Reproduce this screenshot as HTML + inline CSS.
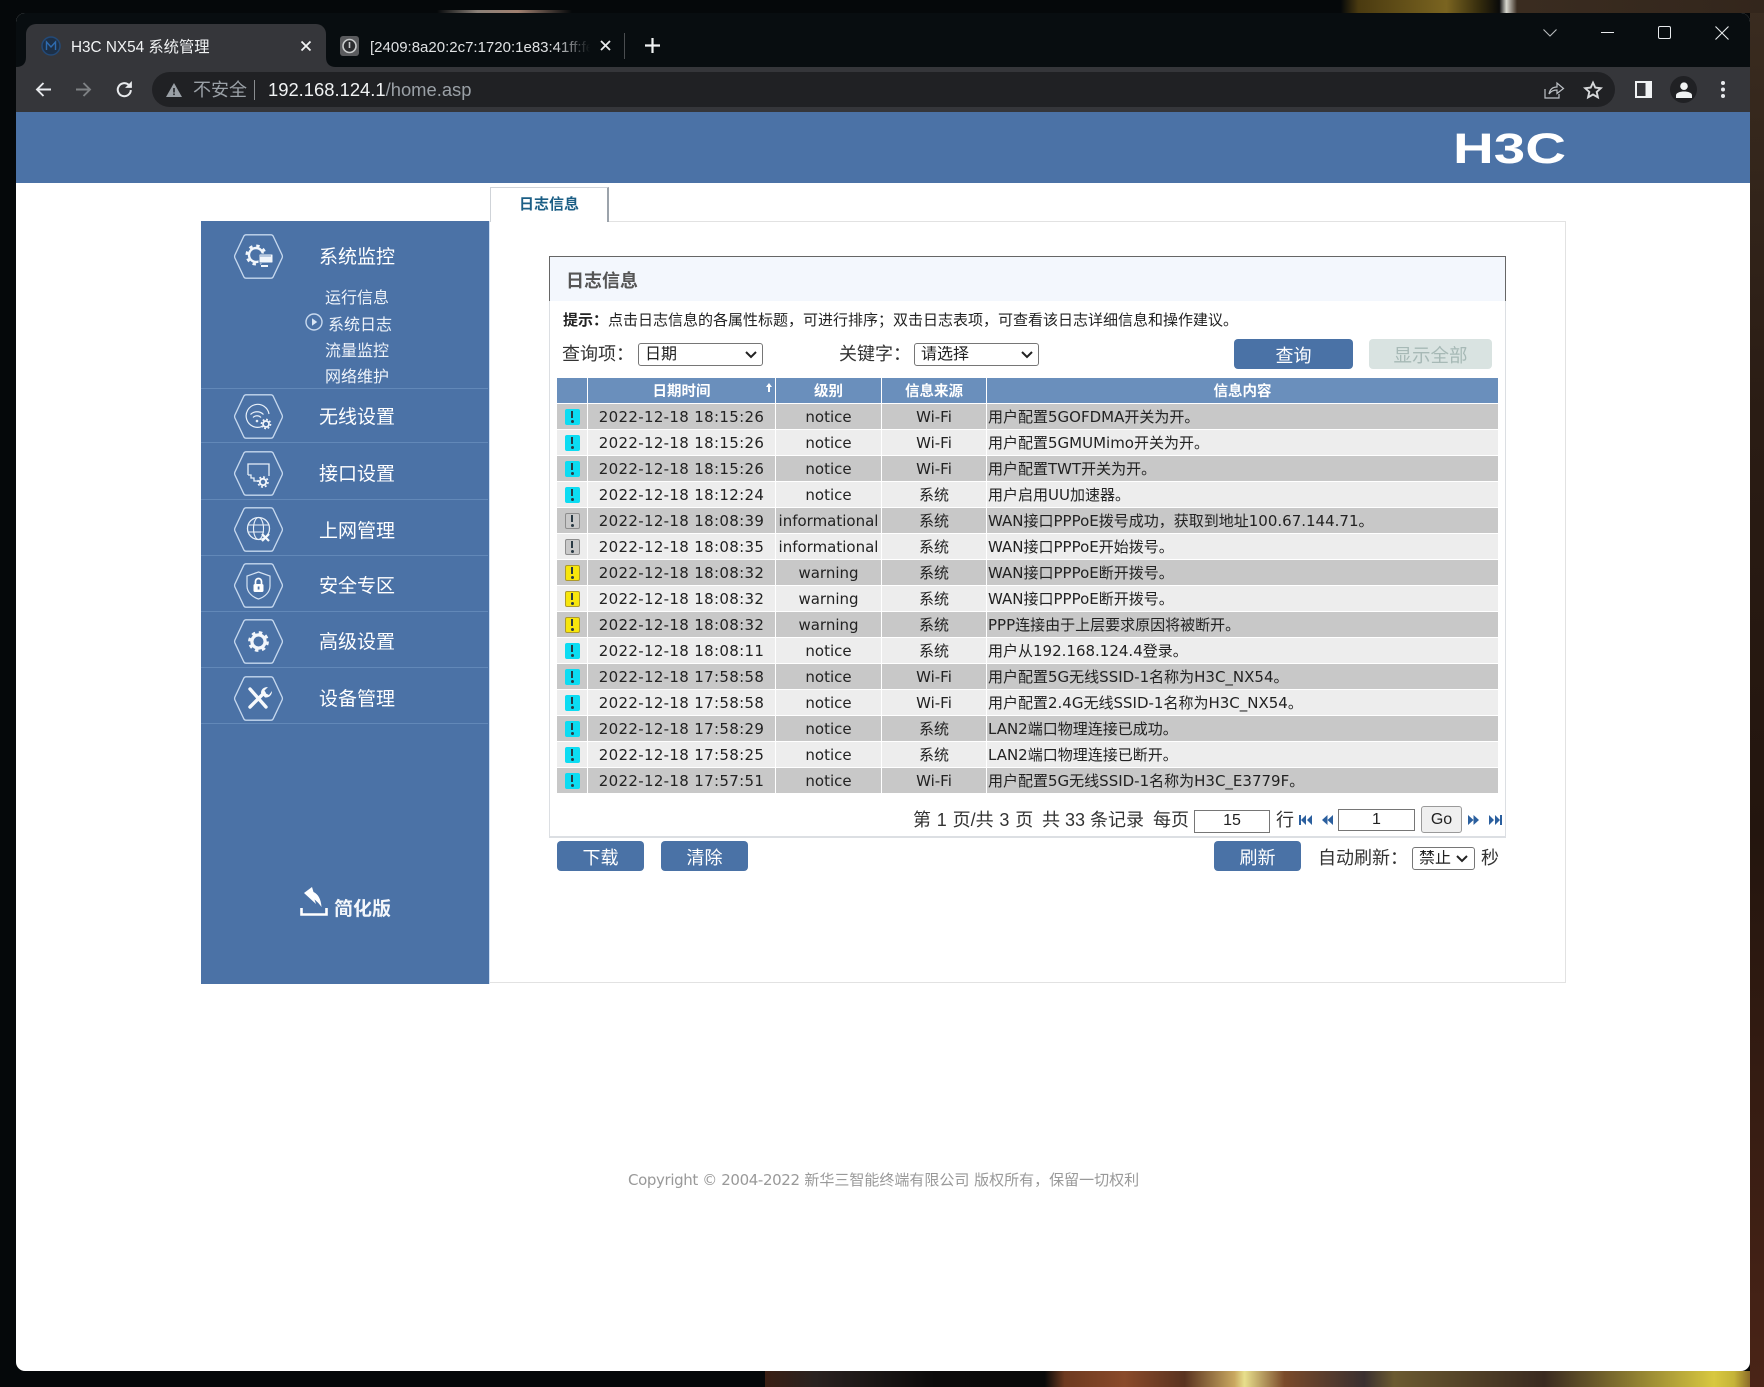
<!DOCTYPE html>
<html lang="zh-CN">
<head>
<meta charset="utf-8">
<title>H3C NX54 系统管理</title>
<style>
html,body{margin:0;padding:0;width:1764px;height:1387px;overflow:hidden;background:#05080a;}
*{box-sizing:border-box;}
body{position:relative;font-family:"Liberation Sans","Noto Sans CJK SC",sans-serif;}
.a{position:absolute;}
.t{position:absolute;white-space:nowrap;line-height:1;}
#win{position:absolute;left:16px;top:13px;width:1734px;height:1358px;border-radius:9px;background:#fff;overflow:hidden;}
.s{color:#fff;font-size:19px;left:319px;}
.sub{color:#eef3fa;font-size:16px;}
.dv{position:absolute;left:201px;width:287px;height:1px;background:#6288b8;}
.hex{position:absolute;left:234px;width:49px;height:45px;overflow:visible;}
.btn{position:absolute;background:#4a72a6;border-radius:4px;color:#fff;font-size:18px;line-height:34px;text-align:center;height:30px;}
table{position:absolute;left:557px;top:378px;width:941px;border-collapse:separate;border-spacing:0;table-layout:fixed;font-family:"DejaVu Sans","Noto Sans CJK SC",sans-serif;font-size:15px;color:#222;}
td,th{padding:0;height:26px;border-right:1px solid #fff;border-bottom:1px solid #fff;text-align:center;white-space:nowrap;overflow:hidden;line-height:24px;}
td:last-child,th:last-child{border-right:0;text-align:left;padding-left:1px;}
th{background:#6a8fbc;color:#fff;font-weight:bold;font-family:"Noto Sans CJK SC",sans-serif;font-size:14.5px;position:relative;}
th:last-child{text-align:center;padding-left:0;}
tr.o td{background:#c8c8c8;}
tr.e td{background:#ededed;}
td.d{letter-spacing:.33px;}
td b{display:block;width:15px;height:16px;margin:1px auto 0;border-radius:2px;position:relative;}
td b:before{content:"";position:absolute;left:6.5px;top:2px;width:2px;height:7px;background:#2a3a44;}
td b:after{content:"";position:absolute;left:6px;top:11px;width:3px;height:3px;border-radius:2px;background:#2a3a44;}
b.n{background:#0cdcf2;}
b.g{background:#c9c9c9;border:1px solid #8d8d8d;}
b.g:before{left:5.5px;top:1px;}
b.g:after{left:5px;top:10px;}
b.w{background:#f7e60c;border:1px solid #ad9a2c;}
b.w:before{left:5.5px;top:1px;}
b.w:after{left:5px;top:10px;}
select{position:absolute;-webkit-appearance:none;appearance:none;font-family:"Liberation Sans","Noto Sans CJK SC",sans-serif;font-size:16px;background:#fff;border:1px solid #767676;border-radius:3px;color:#222;padding:0 0 0 6px;margin:0;}
input{position:absolute;font-family:"Liberation Sans",sans-serif;font-size:16px;text-align:center;border:1px solid #767676;border-radius:0;padding:0;margin:0;color:#222;background:#fff;}
.l{font-size:18px;color:#333;}
.p{position:absolute;overflow:visible;}
</style>
</head>
<body>
<!-- wallpaper -->
<div class="a" style="left:765px;top:1371px;width:999px;height:16px;background:linear-gradient(90deg,#3a1f14 0,#2a2220 5%,#0c0b0b 17%,#0a0a0a 28%,#6e3a20 30%,#8a4a2a 36%,#5a3320 42%,#c9a860 47%,#e8df8c 48%,#7a4a2a 52%,#3a3030 60%,#6b5a30 63%,#3a2a20 78%,#d8c840 95%,#c5b438 97%,#5a2c1a 100%);"></div>
<div class="a" style="left:1750px;top:0;width:14px;height:1387px;background:linear-gradient(180deg,#3a2c20,#2a1c14 30%,#23150e 60%,#4a2417);"></div>
<div class="a" style="left:0;top:0;width:1764px;height:13px;background:linear-gradient(90deg,#05080a 0,#05080a 76%,#4a3a10 77%,#7a6420 82%,#30280c 84%,#0a0a0a 85%,#d8d8d0 85.4%,#3a2c20 86%,#33261c 100%);"></div>
<div class="a" style="left:437px;top:10px;width:135px;height:3px;background:linear-gradient(90deg,#05080a,#8a8078 30%,#a08070 60%,#05080a);"></div>

<div id="win"></div>
<!-- tab strip -->
<div class="a" style="left:16px;top:13px;width:1734px;height:54px;background:#080d10;border-radius:9px 9px 0 0;"></div>
<div class="a" style="left:26px;top:24px;width:300px;height:44px;background:#35363a;border-radius:10px 10px 0 0;"></div>
<svg class="p" style="left:16px;top:57px" width="10" height="10"><path d="M0 10H10V0Q10 10 0 10Z" fill="#35363a"/></svg>
<svg class="p" style="left:326px;top:57px" width="10" height="10"><path d="M10 10H0V0Q0 10 10 10Z" fill="#35363a"/></svg>
<svg class="p" style="left:41px;top:36px" width="20" height="20" viewBox="0 0 20 20"><circle cx="10" cy="10" r="9" fill="#1d3047" stroke="#234a78" stroke-width="1.5"/><path d="M5.5 14V6L10 11L14.5 6V14" fill="none" stroke="#2e6bb0" stroke-width="1.4"/></svg>
<div class="t" style="left:71px;top:39px;font-size:15.3px;line-height:18px;color:#f1f3f4;">H3C NX54 系统管理</div>
<svg class="p" style="left:300px;top:40px" width="12" height="12"><path d="M1.5 1.5L10.5 10.5M10.5 1.5L1.5 10.5" stroke="#f1f3f4" stroke-width="1.8"/></svg>
<svg class="p" style="left:340px;top:36px" width="20" height="20" viewBox="0 0 20 20"><rect width="19" height="20" rx="3" fill="#5a5b5e"/><circle cx="9.5" cy="10" r="6.5" fill="#2c2d30" stroke="#c9cbcc" stroke-width="1.6"/><rect x="8.7" y="6" width="1.6" height="6" fill="#c9cbcc"/></svg>
<div class="t" style="left:370px;top:39px;width:220px;overflow:hidden;font-size:15px;line-height:18px;color:#dfe1e3;">[2409:8a20:2c7:1720:1e83:41ff:fe</div>
<div class="a" style="left:555px;top:36px;width:35px;height:20px;background:linear-gradient(90deg,rgba(8,13,16,0),#080d10);"></div>
<svg class="p" style="left:600px;top:40px" width="11" height="11"><path d="M1 1L10 10M10 1L1 10" stroke="#e8eaed" stroke-width="1.8"/></svg>
<div class="a" style="left:624px;top:33px;width:1px;height:26px;background:#4a4d50;"></div>
<svg class="p" style="left:645px;top:38px" width="15" height="15"><path d="M7.500 0V15M0 7.500H15" stroke="#f1f3f4" stroke-width="2.2"/></svg>
<!-- window controls -->
<svg class="p" style="left:1543px;top:28px" width="14" height="10"><path d="M.5 1.5L7 8L13.5 1.5" fill="none" stroke="#b9bcbe" stroke-width="1.1"/></svg>
<div class="a" style="left:1601px;top:32px;width:13px;height:1px;background:#e8eaed;"></div>
<div class="a" style="left:1658px;top:26px;width:13px;height:13px;border:1px solid #e8eaed;border-radius:2px;"></div>
<svg class="p" style="left:1715px;top:26px" width="14" height="14"><path d="M.5 .5L13.5 13.5M13.5 .5L.5 13.5" stroke="#e8eaed" stroke-width="1.1"/></svg>
<!-- toolbar -->
<div class="a" style="left:16px;top:67px;width:1734px;height:45px;background:#35363a;"></div>
<div class="a" style="left:152px;top:72px;width:1463px;height:35px;background:#202124;border-radius:18px;"></div>
<svg class="p" style="left:35px;top:81px" width="17" height="17"><path d="M16 8.500H2M8.500 2L2 8.500L8.500 15" fill="none" stroke="#e8eaed" stroke-width="1.9"/></svg>
<svg class="p" style="left:75px;top:81px" width="17" height="17"><path d="M1 8.500H15M8.500 2L15 8.500L8.500 15" fill="none" stroke="#7e8184" stroke-width="1.9"/></svg>
<svg class="p" style="left:115px;top:80px" width="19" height="19" viewBox="0 0 18 18"><path d="M15 9.500A6.200 6.200 0 1 1 13 4.600" fill="none" stroke="#e8eaed" stroke-width="1.9"/><path d="M16 1V7.500H9.500Z" fill="#e8eaed"/></svg>
<svg class="p" style="left:166px;top:83px" width="16" height="14"><path d="M8 0L16 14H0Z" fill="#9aa0a6"/><rect x="7.200" y="5" width="1.600" height="4.500" fill="#202124"/><rect x="7.200" y="10.500" width="1.600" height="1.600" fill="#202124"/></svg>
<div class="t" style="left:193px;top:80px;font-size:18px;line-height:20px;color:#9aa0a6;">不安全</div>
<div class="a" style="left:254px;top:80px;width:1px;height:20px;background:#8a8d90;"></div>
<div class="t" style="left:268px;top:79px;font-size:18.4px;line-height:21px;color:#f1f3f4;">192.168.124.1<span style="color:#9aa0a6">/home.asp</span></div>
<svg class="p" style="left:1544px;top:81px" width="20" height="18" viewBox="0 0 20 18"><path d="M1 8V17H15V13" fill="none" stroke="#bdc1c6" stroke-width="1.2"/><path d="M5 13C6 8 9 6 13 6V2L19.500 7.500L13 12.500V9C10 9 7 10 5 13Z" fill="none" stroke="#bdc1c6" stroke-width="1.2"/></svg>
<svg class="p" style="left:1584px;top:81px" width="18" height="18" viewBox="0 0 18 18"><path d="M9 1.600L11.300 6.600L16.800 7.200L12.700 10.900L13.900 16.300L9 13.500L4.100 16.300L5.300 10.900L1.200 7.200L6.700 6.600Z" fill="none" stroke="#d6d8da" stroke-width="1.900"/></svg>
<svg class="p" style="left:1635px;top:81px" width="17" height="17"><rect width="17" height="17" fill="#f1f3f4"/><rect x="2" y="2" width="8.500" height="13" fill="#35363a"/></svg>
<div class="a" style="left:1670px;top:76px;width:27px;height:27px;border-radius:50%;background:#202124;"></div>
<svg class="p" style="left:1676px;top:82px" width="16" height="16"><circle cx="8" cy="4.200" r="3.800" fill="#f1f3f4"/><path d="M0 16V13.200C0 10.800 4 9.500 8 9.500C12 9.500 16 10.800 16 13.200V16Z" fill="#f1f3f4"/></svg>
<svg class="p" style="left:1720px;top:81px" width="6" height="17"><circle cx="3" cy="2" r="2" fill="#e8eaed"/><circle cx="3" cy="8.500" r="2" fill="#e8eaed"/><circle cx="3" cy="15" r="2" fill="#e8eaed"/></svg>
<!-- page header -->
<div class="a" style="left:16px;top:112px;width:1734px;height:71px;background:#4b72a6;"></div>
<svg class="p" style="left:1453px;top:130px" width="113" height="35"><text x="0" y="33" font-family="Liberation Sans" font-weight="bold" font-size="43" fill="#fff" textLength="113" lengthAdjust="spacingAndGlyphs">H3C</text></svg>

<!-- content frame -->
<div class="a" style="left:489px;top:221px;width:1077px;height:762px;border:1px solid #e2e2e2;border-left:0;"></div>
<div class="a" style="left:490px;top:187px;width:119px;height:35px;background:#fff;border:1px solid #cfd3d8;border-right:2px solid #9ca3ab;border-bottom:0;"></div>
<div class="t" style="left:519px;top:197px;font-size:15px;line-height:16px;font-weight:bold;color:#1b5e85;">日志信息</div>

<!-- sidebar -->
<div class="a" style="left:201px;top:221px;width:288px;height:763px;background:#4b72a6;"></div>
<div class="a" style="left:489px;top:221px;width:1px;height:763px;background:#cfe0f5;"></div>
<div class="dv" style="top:388px"></div><div class="dv" style="top:442px"></div><div class="dv" style="top:499px"></div><div class="dv" style="top:555px"></div><div class="dv" style="top:611px"></div><div class="dv" style="top:667px"></div><div class="dv" style="top:723px"></div>

<svg width="0" height="0" style="position:absolute"><defs><path id="hx" d="M12 .8H37Q38.500 .8 39.200 2.200L48 20.800Q48.800 22.500 48 24.200L39.200 42.800Q38.500 44.200 37 44.200H12Q10.500 44.200 9.800 42.800L1 24.200Q.2 22.500 1 20.800L9.800 2.200Q10.500 .8 12 .8Z" fill="none" stroke="#c6d8ee" stroke-width="1.3"/></defs></svg>

<svg class="hex" style="top:234px" viewBox="0 0 49 45"><use href="#hx"/>
<circle cx="22" cy="21" r="7" fill="none" stroke="#f2f6fb" stroke-width="2.400"/><circle cx="22" cy="21" r="9.300" fill="none" stroke="#f2f6fb" stroke-width="2.400" stroke-dasharray="3.400 3.900"/><rect x="25" y="20" width="14" height="9" rx="1" fill="#f2f6fb" stroke="#4b72a6" stroke-width="1"/><path d="M26 22H37" stroke="#7f9cc4" stroke-width="1"/><path d="M27 32H34" stroke="#f2f6fb" stroke-width="2"/></svg>
<svg class="hex" style="top:394px" viewBox="0 0 49 45"><use href="#hx"/>
<path d="M28 32.500A11.500 11.500 0 1 1 35 20" fill="none" stroke="#e8f0f9" stroke-width="1.200"/><path d="M16.500 20.500A9 9 0 0 1 29.500 20.500M19 23.500A5.500 5.500 0 0 1 27 23.500" fill="none" stroke="#e8f0f9" stroke-width="1.200"/><circle cx="23" cy="27" r="1.300" fill="#e8f0f9"/><circle cx="32" cy="30" r="3" fill="none" stroke="#f2f6fb" stroke-width="1.700"/><circle cx="32" cy="30" r="4.600" fill="none" stroke="#f2f6fb" stroke-width="1.500" stroke-dasharray="1.800 1.800"/></svg>
<svg class="hex" style="top:451px" viewBox="0 0 49 45"><use href="#hx"/>
<path d="M14 24V13H35V25M14 24L17 24V27L20 27V30L24 30" fill="none" stroke="#e8f0f9" stroke-width="1.300"/><circle cx="29" cy="31" r="3.200" fill="none" stroke="#f2f6fb" stroke-width="1.900"/><circle cx="29" cy="31" r="5" fill="none" stroke="#f2f6fb" stroke-width="1.600" stroke-dasharray="2 1.900"/></svg>
<svg class="hex" style="top:507px" viewBox="0 0 49 45"><use href="#hx"/>
<circle cx="24.500" cy="21.500" r="11" fill="none" stroke="#e8f0f9" stroke-width="1.300"/><ellipse cx="24.500" cy="21.500" rx="5" ry="11" fill="none" stroke="#e8f0f9" stroke-width="1.100"/><path d="M13.500 18H35.500M13.500 25H30" stroke="#e8f0f9" stroke-width="1.100"/><path d="M28 27L35 34M35 27L28 34" stroke="#f6f9fc" stroke-width="2.200"/></svg>
<svg class="hex" style="top:563px" viewBox="0 0 49 45"><use href="#hx"/>
<path d="M24.500 9L36 13V23C36 29 31 34 24.500 36C18 34 13 29 13 23V13Z" fill="none" stroke="#d6e3f3" stroke-width="1.200"/><rect x="19.500" y="21" width="10" height="8" rx="1.500" fill="#fff"/><path d="M21.500 21V18.500A3 3 0 0 1 27.500 18.500V21" fill="none" stroke="#fff" stroke-width="1.700"/><rect x="23.700" y="23.500" width="1.800" height="3" fill="#4b72a6"/></svg>
<svg class="hex" style="top:619px" viewBox="0 0 49 45"><use href="#hx"/>
<circle cx="24.500" cy="22.500" r="6.600" fill="none" stroke="#f2f6fb" stroke-width="3.200"/><circle cx="24.500" cy="22.500" r="9" fill="none" stroke="#f2f6fb" stroke-width="2.800" stroke-dasharray="3.500 3.570"/></svg>
<svg class="hex" style="top:676px" viewBox="0 0 49 45"><use href="#hx"/>
<path d="M16 13L32 31" stroke="#f6f9fc" stroke-width="3.400" stroke-linecap="round"/><path d="M16 31L30 17" stroke="#f6f9fc" stroke-width="3.400" stroke-linecap="round"/><path d="M27 17C27 13 30 11 34 11L30.500 14.500L32 17.500L35 19L38 15C38 19 35 22 31 21.500Z" fill="#f6f9fc"/></svg>

<div class="t s" style="top:248px">系统监控</div>
<div class="t sub" style="left:325px;top:291px">运行信息</div>
<svg class="p" style="left:305px;top:313px" width="18" height="18"><circle cx="9" cy="9" r="8" fill="none" stroke="#c9daef" stroke-width="1.400"/><path d="M7 5.200L12.200 9L7 12.800Z" fill="#d9e6f5"/></svg>
<div class="t sub" style="left:328px;top:318px">系统日志</div>
<div class="t sub" style="left:325px;top:344px">流量监控</div>
<div class="t sub" style="left:325px;top:370px">网络维护</div>
<div class="t s" style="top:408px">无线设置</div>
<div class="t s" style="top:465px">接口设置</div>
<div class="t s" style="top:522px">上网管理</div>
<div class="t s" style="top:577px">安全专区</div>
<div class="t s" style="top:633px">高级设置</div>
<div class="t s" style="top:690px">设备管理</div>
<svg class="p" style="left:300px;top:887px" width="28" height="30" viewBox="0 0 28 30"><path d="M1.500 21V27.500H26.500V21" fill="none" stroke="#fff" stroke-width="2.600"/><path d="M4 6L12 0L13.500 5C18 7 21 12 21.500 20C18 15 15 13 14.500 12.500L16 17Z" fill="#fff"/></svg>
<div class="t" style="left:334px;top:900px;font-size:19px;font-weight:bold;color:#f4f7fb;">简化版</div>

<!-- panel -->
<div class="a" style="left:549px;top:256px;width:957px;height:45px;background:#f3f7fd;border:1px solid #666;border-bottom:0;"></div>
<div class="a" style="left:549px;top:301px;width:957px;height:537px;border:1px solid #dcdfe3;border-top:0;border-bottom:2px solid #dcdfe3;"></div>
<div class="t" style="left:566px;top:272px;font-size:18px;font-weight:bold;color:#555;">日志信息</div>
<div class="t" style="left:563px;top:313px;font-size:15px;color:#222;"><span style="font-weight:bold">提示：</span>点击日志信息的各属性标题，可进行排序；双击日志表项，可查看该日志详细信息和操作建议。</div>
<div class="t l" style="left:562px;top:345px">查询项：</div>
<select style="left:638px;top:343px;width:125px;height:23px;"><option>日期</option></select>
<svg class="p" style="left:745px;top:351px" width="12" height="8"><path d="M1 1L6 6L11 1" fill="none" stroke="#222" stroke-width="2"/></svg>
<div class="t l" style="left:839px;top:345px">关键字：</div>
<select style="left:914px;top:343px;width:125px;height:23px;"><option>请选择</option></select>
<svg class="p" style="left:1021px;top:351px" width="12" height="8"><path d="M1 1L6 6L11 1" fill="none" stroke="#222" stroke-width="2"/></svg>
<div class="btn" style="left:1234px;top:339px;width:119px;">查询</div>
<div class="btn" style="left:1369px;top:339px;width:123px;background:#d9e3e1;color:#a7b9b6;font-size:18.500px;">显示全部</div>

<table>
<colgroup><col style="width:31px"><col style="width:188px"><col style="width:106px"><col style="width:105px"><col style="width:511px"></colgroup>
<tr><th></th><th>日期时间<svg style="position:absolute;left:178px;top:5px" width="6" height="10"><path d="M3 0L6 4H4V9H2V4H0Z" fill="#fff"/></svg></th><th>级别</th><th>信息来源</th><th>信息内容</th></tr>
<tr class="o"><td><b class="n"></b></td><td class="d">2022-12-18 18:15:26</td><td>notice</td><td>Wi-Fi</td><td>用户配置5GOFDMA开关为开。</td></tr>
<tr class="e"><td><b class="n"></b></td><td class="d">2022-12-18 18:15:26</td><td>notice</td><td>Wi-Fi</td><td>用户配置5GMUMimo开关为开。</td></tr>
<tr class="o"><td><b class="n"></b></td><td class="d">2022-12-18 18:15:26</td><td>notice</td><td>Wi-Fi</td><td>用户配置TWT开关为开。</td></tr>
<tr class="e"><td><b class="n"></b></td><td class="d">2022-12-18 18:12:24</td><td>notice</td><td>系统</td><td>用户启用UU加速器。</td></tr>
<tr class="o"><td><b class="g"></b></td><td class="d">2022-12-18 18:08:39</td><td>informational</td><td>系统</td><td>WAN接口PPPoE拨号成功，获取到地址100.67.144.71。</td></tr>
<tr class="e"><td><b class="g"></b></td><td class="d">2022-12-18 18:08:35</td><td>informational</td><td>系统</td><td>WAN接口PPPoE开始拨号。</td></tr>
<tr class="o"><td><b class="w"></b></td><td class="d">2022-12-18 18:08:32</td><td>warning</td><td>系统</td><td>WAN接口PPPoE断开拨号。</td></tr>
<tr class="e"><td><b class="w"></b></td><td class="d">2022-12-18 18:08:32</td><td>warning</td><td>系统</td><td>WAN接口PPPoE断开拨号。</td></tr>
<tr class="o"><td><b class="w"></b></td><td class="d">2022-12-18 18:08:32</td><td>warning</td><td>系统</td><td>PPP连接由于上层要求原因将被断开。</td></tr>
<tr class="e"><td><b class="n"></b></td><td class="d">2022-12-18 18:08:11</td><td>notice</td><td>系统</td><td>用户从192.168.124.4登录。</td></tr>
<tr class="o"><td><b class="n"></b></td><td class="d">2022-12-18 17:58:58</td><td>notice</td><td>Wi-Fi</td><td>用户配置5G无线SSID-1名称为H3C_NX54。</td></tr>
<tr class="e"><td><b class="n"></b></td><td class="d">2022-12-18 17:58:58</td><td>notice</td><td>Wi-Fi</td><td>用户配置2.4G无线SSID-1名称为H3C_NX54。</td></tr>
<tr class="o"><td><b class="n"></b></td><td class="d">2022-12-18 17:58:29</td><td>notice</td><td>系统</td><td>LAN2端口物理连接已成功。</td></tr>
<tr class="e"><td><b class="n"></b></td><td class="d">2022-12-18 17:58:25</td><td>notice</td><td>系统</td><td>LAN2端口物理连接已断开。</td></tr>
<tr class="o"><td><b class="n"></b></td><td class="d">2022-12-18 17:57:51</td><td>notice</td><td>Wi-Fi</td><td>用户配置5G无线SSID-1名称为H3C_E3779F。</td></tr>
</table>

<!-- pager -->
<div class="t l" style="left:913px;top:811px;word-spacing:.8px">第 1 页/共 3 页</div>
<div class="t l" style="left:1042px;top:811px">共 33 条记录</div>
<div class="t l" style="left:1153px;top:811px">每页</div>
<input style="left:1194px;top:810px;width:76px;height:23px;padding-bottom:2px;" value="15">
<div class="t l" style="left:1276px;top:811px">行</div>
<svg class="p" style="left:1299px;top:814px" width="13" height="12"><rect x="0" y="1" width="2" height="10" fill="#2b5f9e"/><path d="M7 1L2 6L7 11ZM13 1L8 6L13 11Z" fill="#2b5f9e"/></svg>
<svg class="p" style="left:1322px;top:814px" width="11" height="12"><path d="M5.500 1L0 6L5.500 11ZM11 1L5.500 6L11 11Z" fill="#2b5f9e"/></svg>
<input style="left:1338px;top:809px;width:77px;height:22px;" value="1">
<div class="a" style="left:1421px;top:806px;width:41px;height:27px;background:#efefef;border:1px solid #9a9a9a;border-radius:3px;font-size:16px;line-height:25px;text-align:center;color:#222;">Go</div>
<svg class="p" style="left:1468px;top:814px" width="11" height="12"><path d="M0 1L5.500 6L0 11ZM5.500 1L11 6L5.500 11Z" fill="#2b5f9e"/></svg>
<svg class="p" style="left:1489px;top:814px" width="13" height="12"><path d="M0 1L5 6L0 11ZM6 1L11 6L6 11Z" fill="#2b5f9e"/><rect x="11" y="1" width="2" height="10" fill="#2b5f9e"/></svg>

<div class="btn" style="left:557px;top:841px;width:87px;">下载</div>
<div class="btn" style="left:661px;top:841px;width:87px;">清除</div>
<div class="btn" style="left:1214px;top:841px;width:87px;">刷新</div>
<div class="t l" style="left:1318px;top:849px">自动刷新：</div>
<select style="left:1412px;top:847px;width:63px;height:23px;"><option>禁止</option></select>
<svg class="p" style="left:1456px;top:855px" width="12" height="8"><path d="M1 1L6 6L11 1" fill="none" stroke="#222" stroke-width="2"/></svg>
<div class="t l" style="left:1481px;top:849px">秒</div>

<div class="t" style="left:628px;top:1173px;font-size:15px;color:#999;font-family:'DejaVu Sans','Noto Sans CJK SC',sans-serif;"><span style="letter-spacing:-.38px">Copyright © 2004-2022</span> 新华三智能终端有限公司 版权所有，保留一切权利</div>
</body>
</html>
